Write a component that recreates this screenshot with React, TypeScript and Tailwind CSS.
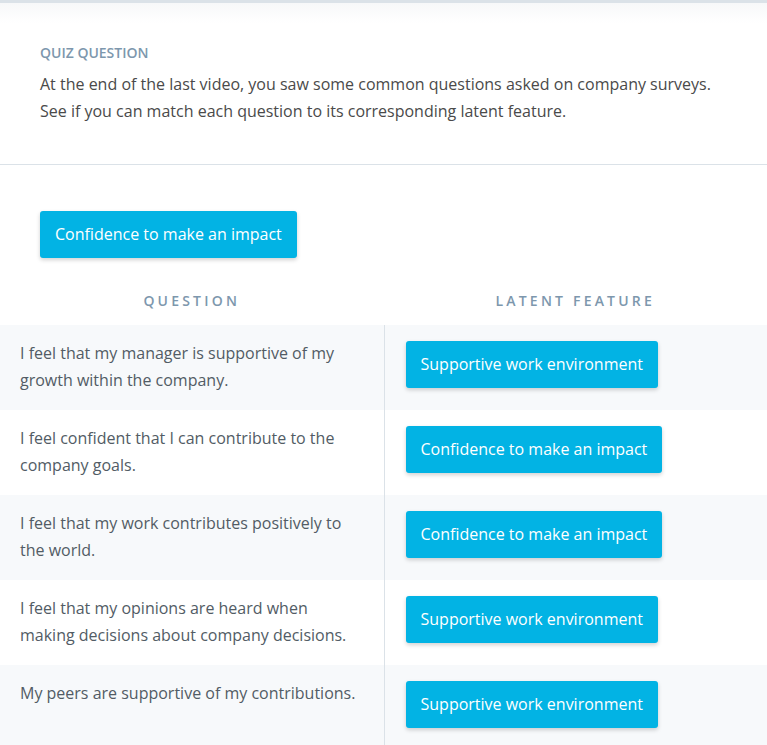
const rows = [
  { q: "I feel that my manager is supportive of my growth within the company.", a: "Supportive work environment" },
  { q: "I feel confident that I can contribute to the company goals.", a: "Confidence to make an impact" },
  { q: "I feel that my work contributes positively to the world.", a: "Confidence to make an impact" },
  { q: "I feel that my opinions are heard when making decisions about company decisions.", a: "Supportive work environment" },
  { q: "My peers are supportive of my contributions.", a: "Supportive work environment" },
];

const Chip = ({ label }: { label: string }) => (
  <div className="inline-block rounded-[3px] bg-[#02b3e4] px-[15px] py-[11px] text-[16px] leading-[25px] text-white shadow-[0_2px_4px_rgba(0,0,0,0.18)]">
    {label}
  </div>
);

export default function App() {
  return (
    <div className="min-h-[745px] bg-white font-['Open_Sans',sans-serif] text-[#525c65]">
      <div className="h-[3px] bg-[#dbe2e8]" />
      <div className="bg-gradient-to-b from-[#f7f8f9] to-white to-[20px] px-10 pb-[39px] pt-[38px]">
        <p className="text-[14px] font-semibold uppercase leading-[24px] text-[#7d97ad]">Quiz Question</p>
        <p className="mt-[6px] text-[16px] leading-[27px] text-[#4a4a4a]">
          At the end of the last video, you saw some common questions asked on company surveys.
          <br />
          See if you can match each question to its corresponding latent feature.
        </p>
      </div>
      <div className="h-px bg-[#dbe2e8]" />
      <div className="px-10 pt-[46px]">
        <Chip label="Confidence to make an impact" />
      </div>
      <div className="mt-[32px] grid grid-cols-2 pb-[14px] text-center text-[14px] font-semibold uppercase tracking-[3.2px] text-[#7d97ad]">
        <div>Question</div>
        <div>Latent Feature</div>
      </div>
      <div>
        {rows.map((r, i) => (
          <div key={i} className={`grid h-[85px] grid-cols-2 ${i % 2 === 0 ? "bg-[#f7f9fb]" : "bg-white"}`}>
            <div className="pl-5 pr-6 pt-[15px] text-[16px] leading-[27px]">{r.q}</div>
            <div className="border-l border-[#dbe2e8] pl-[21px] pt-[16px]">
              <Chip label={r.a} />
            </div>
          </div>
        ))}
      </div>
    </div>
  );
}
